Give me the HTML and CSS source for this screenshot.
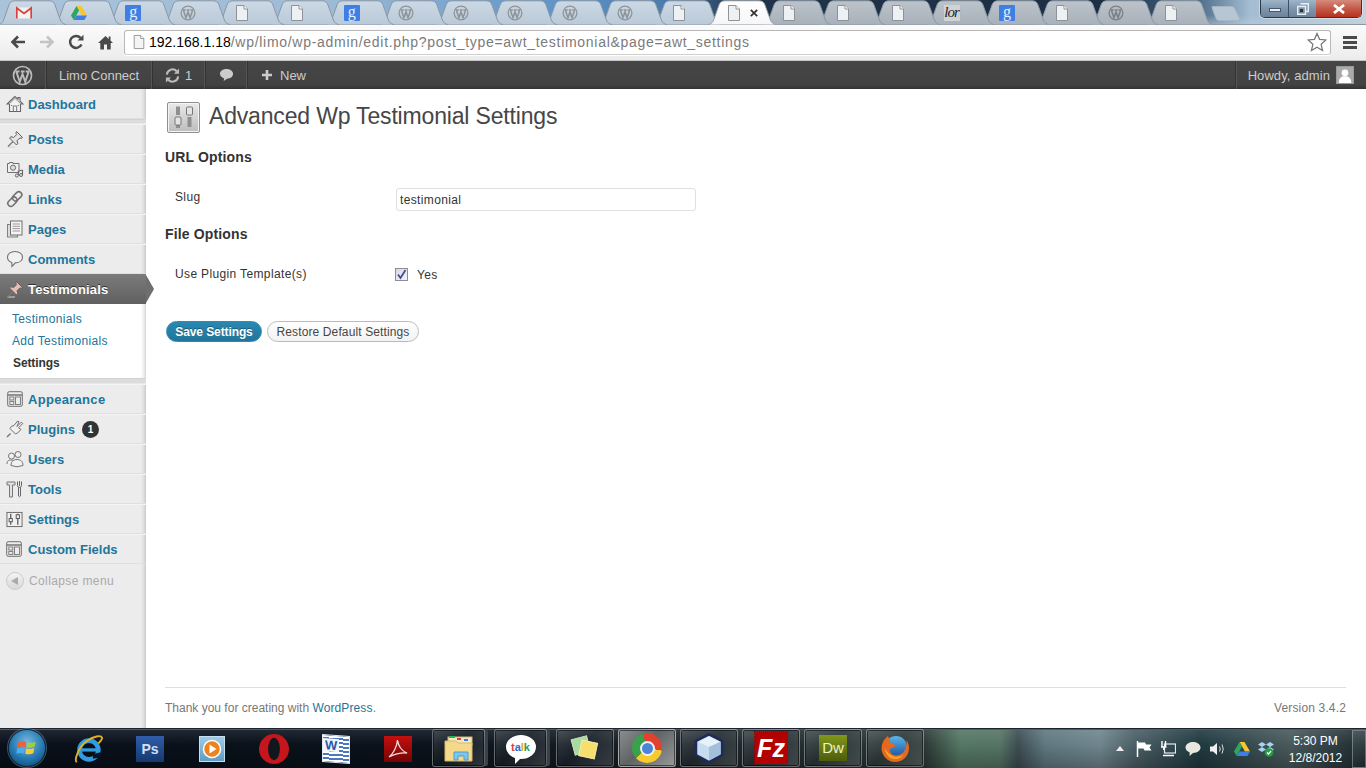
FILE: index.html
```html
<!DOCTYPE html>
<html lang="en">
<head>
<meta charset="utf-8">
<title>Advanced Wp Testimonial Settings</title>
<link rel="stylesheet" href="styles.css">
</head>
<body>
<svg class="defs" width="0" height="0" aria-hidden="true">
  <defs>
    <linearGradient id="tabLight" x1="0" y1="0" x2="0" y2="1"><stop offset="0" stop-color="#ccd9e5"/><stop offset="1" stop-color="#bac9d8"/></linearGradient>
    <linearGradient id="tabDim" x1="0" y1="0" x2="0" y2="1"><stop offset="0" stop-color="#bcc3cb"/><stop offset="1" stop-color="#a8b0b9"/></linearGradient>
    <linearGradient id="tabOn" x1="0" y1="0" x2="0" y2="1"><stop offset="0" stop-color="#ffffff"/><stop offset="1" stop-color="#f6f6f6"/></linearGradient>
    <linearGradient id="foxGlobe" x1="0" y1="0" x2="0" y2="1"><stop offset="0" stop-color="#59b6e6"/><stop offset="1" stop-color="#1d4f9e"/></linearGradient>
    <symbol id="tabshape" viewBox="0 0 68 25"><path d="M0 24.5C3 24.5 5 22 6 19L11 5C12 2 14 .8 17 .8H51C54 .8 56 2 57 5L62 19C63 22 65 24.5 68 24.5"/></symbol>
    <symbol id="doc" viewBox="0 0 16 16"><path d="M2.5 .5H10L13.5 4V15.5H2.5Z" fill="#eef1f4" stroke="#8d9298"/><path d="M10 .5V4H13.5" fill="#fff" stroke="#8d9298"/></symbol>
    <symbol id="wp" viewBox="0 0 20 20"><circle cx="10" cy="10" r="8.6" fill="none" stroke="currentColor" stroke-width="1.6"/><path d="M4.2 6.6L7.4 16L10 8.6L12.6 16L15.8 6.6M3.4 6.2H7.2M8.4 6.2H12M13 6.2H16.6" fill="none" stroke="currentColor" stroke-width="1.9"/></symbol>
    <symbol id="layout" viewBox="0 0 16 16"><rect x=".7" y=".7" width="14.6" height="14.6" rx="1.5" fill="#ececec" stroke="#6e6e6e"/><path d="M1 4H15" stroke="#6e6e6e" stroke-width="1.4"/><rect x="2.8" y="6" width="4" height="3" fill="none" stroke="#808080"/><rect x="2.8" y="10.5" width="4" height="3" fill="none" stroke="#808080"/><rect x="8.5" y="6" width="5" height="7.5" fill="none" stroke="#808080"/></symbol>
    <symbol id="pin" viewBox="0 0 18 18"><path d="M1.5 17H9" stroke="#d2d2d2"/><path d="M7 11.500L2 16.500" stroke="#777" stroke-width="1.300"/><path d="M10.500 1.500L16.500 7.500L15 8.500L14 7.800L11 10.800L11.800 13.500L10.500 15L3.500 8L5 6.700L7.700 7.500L10.700 4.500L9.800 3.200Z" fill="currentColor" stroke="#5f5f5f"/></symbol>
  </defs>
</svg>

<header class="tabstrip">
  <div class="tabs">
    <div class="tab light"><svg class="tabbg" fill="url(#tabLight)"><use href="#tabshape"/></svg>
      <svg class="fav" viewBox="0 0 16 16"><rect y="2.500" width="16" height="11" fill="#f2f2f2"/><path d="M.8 13.500V3L8 8.500L15.200 3V13.500" fill="none" stroke="#d9413a" stroke-width="1.700"/></svg></div>
    <div class="tab light"><svg class="tabbg" fill="url(#tabLight)"><use href="#tabshape"/></svg>
      <svg class="fav" viewBox="0 0 16 16"><path d="M5.5 1H10.5L16 10.5H11Z" fill="#f7c631"/><path d="M5.5 1L0 10.5L2.7 15L8 5.5Z" fill="#2fa65a"/><path d="M2.7 15H13.4L16 10.5H5.3Z" fill="#3f7fe4"/></svg></div>
    <div class="tab light"><svg class="tabbg" fill="url(#tabLight)"><use href="#tabshape"/></svg><span class="fav gfav">g</span></div>
    <div class="tab light"><svg class="tabbg" fill="url(#tabLight)"><use href="#tabshape"/></svg><svg class="fav wpfav"><use href="#wp"/></svg></div>
    <div class="tab light"><svg class="tabbg" fill="url(#tabLight)"><use href="#tabshape"/></svg><svg class="fav"><use href="#doc"/></svg></div>
    <div class="tab light"><svg class="tabbg" fill="url(#tabLight)"><use href="#tabshape"/></svg><svg class="fav"><use href="#doc"/></svg></div>
    <div class="tab light"><svg class="tabbg" fill="url(#tabLight)"><use href="#tabshape"/></svg><span class="fav gfav">g</span></div>
    <div class="tab light"><svg class="tabbg" fill="url(#tabLight)"><use href="#tabshape"/></svg><svg class="fav wpfav"><use href="#wp"/></svg></div>
    <div class="tab light"><svg class="tabbg" fill="url(#tabLight)"><use href="#tabshape"/></svg><svg class="fav wpfav"><use href="#wp"/></svg></div>
    <div class="tab light"><svg class="tabbg" fill="url(#tabLight)"><use href="#tabshape"/></svg><svg class="fav wpfav"><use href="#wp"/></svg></div>
    <div class="tab light"><svg class="tabbg" fill="url(#tabLight)"><use href="#tabshape"/></svg><svg class="fav wpfav"><use href="#wp"/></svg></div>
    <div class="tab light"><svg class="tabbg" fill="url(#tabLight)"><use href="#tabshape"/></svg><svg class="fav wpfav"><use href="#wp"/></svg></div>
    <div class="tab light"><svg class="tabbg" fill="url(#tabLight)"><use href="#tabshape"/></svg><svg class="fav"><use href="#doc"/></svg></div>
    <div class="tab active"><svg class="tabbg" fill="url(#tabOn)"><use href="#tabshape"/></svg><svg class="fav"><use href="#doc"/></svg>
      <svg class="tabclose" viewBox="0 0 8 8"><path d="M.8 .8L7.2 7.2M7.2 .8L.8 7.2" stroke="#333" stroke-width="1.8"/></svg></div>
    <div class="tab dim"><svg class="tabbg" fill="url(#tabDim)"><use href="#tabshape"/></svg><svg class="fav"><use href="#doc"/></svg></div>
    <div class="tab dim"><svg class="tabbg" fill="url(#tabDim)"><use href="#tabshape"/></svg><svg class="fav"><use href="#doc"/></svg></div>
    <div class="tab dim"><svg class="tabbg" fill="url(#tabDim)"><use href="#tabshape"/></svg><svg class="fav"><use href="#doc"/></svg></div>
    <div class="tab dim"><svg class="tabbg" fill="url(#tabDim)"><use href="#tabshape"/></svg><span class="fav lorfav">lor</span></div>
    <div class="tab dim"><svg class="tabbg" fill="url(#tabDim)"><use href="#tabshape"/></svg><span class="fav gfav">g</span></div>
    <div class="tab dim"><svg class="tabbg" fill="url(#tabDim)"><use href="#tabshape"/></svg><svg class="fav"><use href="#doc"/></svg></div>
    <div class="tab dim"><svg class="tabbg" fill="url(#tabDim)"><use href="#tabshape"/></svg><svg class="fav wpfav dark"><use href="#wp"/></svg></div>
    <div class="tab dim"><svg class="tabbg" fill="url(#tabDim)"><use href="#tabshape"/></svg><svg class="fav"><use href="#doc"/></svg></div>
  </div>
  <svg class="newtab" viewBox="0 0 30 15"><path d="M1 1.5Q1 .5 2 .5H21Q23 .5 24 3L28.500 12.500Q29 14.500 27 14.500H8Q6 14.500 5 12.500Z" fill="#b7c6d4" stroke="#a5b5c4"/></svg>
  <div class="winctl">
    <div class="wbtn wmin"><i class="minbar"></i></div>
    <div class="wbtn wmax"><svg viewBox="0 0 12 12" width="12" height="12"><path d="M3.500 .7H11.300V8.500H8.500M.7 3.500H8.500V11.300H.7Z" fill="none" stroke="#e9eef3" stroke-width="1.400"/><rect x="3" y="6" width="3" height="3" fill="#333"/></svg></div>
    <div class="wbtn wclose"><svg viewBox="0 0 14 10" width="14" height="10"><path d="M2 1L12 9M12 1L2 9" stroke="#fff" stroke-width="2.800"/></svg></div>
  </div>
</header>

<div class="toolbar">
  <svg class="navicon" viewBox="0 0 16 14"><path d="M15 7H3M8 1.500L2.500 7L8 12.500" fill="none" stroke="#4a4a4a" stroke-width="2.600"/></svg>
  <svg class="navicon" viewBox="0 0 16 14"><path d="M1 7H13M8 1.500L13.500 7L8 12.500" fill="none" stroke="#c4c4c4" stroke-width="2.600"/></svg>
  <svg class="navicon reload" viewBox="0 0 16 16"><path d="M13.500 10.500A6 6 0 1 1 12.500 3.800" fill="none" stroke="#4a4a4a" stroke-width="2.500"/><path d="M9.500 6.500H15.500V.8Z" fill="#4a4a4a"/></svg>
  <svg class="navicon home" viewBox="0 0 15 15"><path d="M7.500 1L0 8H2.300V14.500H6V9.500H9V14.500H12.700V8H15L12.500 5.600V1.500H10.700V3.900Z" fill="#4a4a4a"/></svg>
  <div class="urlbar">
    <svg class="urlpage" viewBox="0 0 16 16"><path d="M2.500 .5H10L13.500 4V15.500H2.500Z" fill="#f4f4f4" stroke="#8d8d8d"/><path d="M10 .5V4H13.500" fill="#fff" stroke="#8d8d8d"/></svg>
    <span class="urltext"><span class="urlhost">192.168.1.18</span>/wp/limo/wp-admin/edit.php?post_type=awt_testimonial&amp;page=awt_settings</span>
    <svg class="star" viewBox="0 0 18 18"><path d="M9 1.300L11.300 6.600L17 7.200L12.700 11L14 16.700L9 13.700L4 16.700L5.300 11L1 7.200L6.700 6.600Z" fill="#fff" stroke="#777" stroke-width="1.100"/></svg>
  </div>
  <div class="chromemenu"><i></i><i></i><i></i></div>
</div>

<nav class="adminbar">
  <div class="abitem abwp"><svg class="ablogo"><use href="#wp"/></svg></div>
  <div class="abitem absite">Limo Connect</div>
  <div class="abitem abupd"><svg class="abrefresh" viewBox="0 0 16 16"><path d="M2 7A6 6 0 0 1 12.500 3.500M14 9A6 6 0 0 1 3.500 12.500" fill="none" stroke="#bbb" stroke-width="2.200"/><path d="M15 .5V6H9.500ZM1 15.500V10H6.500Z" fill="#bbb"/></svg>1</div>
  <div class="abitem abcom"><svg class="abbubble" viewBox="0 0 16 14"><path d="M8 .5C3.800 .5 1 2.800 1 5.700C1 8 2.800 9.800 5.400 10.600L5 13.500L8.600 10.900C12.600 10.800 15 8.500 15 5.700C15 2.800 12.200 .5 8 .5Z" fill="#ccc"/></svg></div>
  <div class="abitem abnew"><svg class="abplus" viewBox="0 0 12 12"><path d="M6 1V11M1 6H11" stroke="#ccc" stroke-width="2.600"/></svg>New</div>
  <div class="abitem abhowdy">Howdy, admin<span class="avatar"><svg viewBox="0 0 18 18" width="16" height="16"><circle cx="9" cy="6.500" r="3.800" fill="#fff"/><path d="M2 18C2 12.500 5 10.500 9 10.500S16 12.500 16 18Z" fill="#fff"/></svg></span></div>
</nav>

<div class="main">
  <aside class="sidebar">
    <ul class="menu">
      <li class="mi first"><svg class="mic" viewBox="0 0 18 18"><path d="M9 1.500L1 9H3.500V16.500H14.500V9H17L14 6.200V2.500H12V4.300Z" fill="#f2f2f2" stroke="#666" stroke-width="1.100"/><path d="M3.500 8.500L9 3.500L14.500 8.500" fill="none" stroke="#999"/><path d="M7.300 16.500V11H10.700V16.500M5 10.500H6.300M11.700 10.500H13" fill="none" stroke="#777"/></svg><a>Dashboard</a></li>
      <li class="msep"></li>
      <li class="mi"><svg class="mic picon"><use href="#pin"/></svg><a>Posts</a></li>
      <li class="mi"><svg class="mic" viewBox="0 0 18 18"><path d="M1.500 3.500H3.500V2.500H7V3.500H13V12.500H1.500Z" fill="#efefef" stroke="#707070"/><circle cx="7" cy="7.700" r="2.600" fill="#dcdcdc" stroke="#707070"/><path d="M12.300 11V15.500M16.500 10V15" stroke="#666" stroke-width="1.100"/><path d="M12.300 11L16.500 10" stroke="#666"/><circle cx="10.800" cy="15.500" r="1.500" fill="#e8e8e8" stroke="#666"/><circle cx="15" cy="15" r="1.500" fill="#e8e8e8" stroke="#666"/></svg><a>Media</a></li>
      <li class="mi"><svg class="mic" viewBox="0 0 18 18"><rect x="8" y="1" width="6" height="10.500" rx="3" transform="rotate(45 11 6.500)" fill="none" stroke="#737373" stroke-width="1.600"/><rect x="3.500" y="6.500" width="6" height="10.500" rx="3" transform="rotate(45 6.500 11.700)" fill="none" stroke="#737373" stroke-width="1.600"/></svg><a>Links</a></li>
      <li class="mi"><svg class="mic" viewBox="0 0 18 18"><rect x="1.500" y="4.500" width="10" height="12.500" fill="#dcdcdc" stroke="#808080"/><rect x="4.500" y="1" width="11.500" height="14" fill="#f4f4f4" stroke="#6e6e6e"/><path d="M6.500 4H14M6.500 6.300H14M6.500 8.600H14M6.500 11H14" stroke="#999"/></svg><a>Pages</a></li>
      <li class="mi"><svg class="mic" viewBox="0 0 18 18"><path d="M9 1.500C4.500 1.500 1.500 4 1.500 7.200C1.500 9.700 3.300 11.600 5.800 12.400L6 16.500L9.400 12.900C13.700 12.800 16.500 10.300 16.500 7.200C16.500 4 13.500 1.500 9 1.500Z" fill="#f1f1f1" stroke="#737373" stroke-width="1.100"/></svg><a>Comments</a></li>
      <li class="mi current"><svg class="mic picon pink"><use href="#pin"/></svg><a>Testimonials</a></li>
      <li class="sub">
        <a class="sublink">Testimonials</a>
        <a class="sublink">Add Testimonials</a>
        <a class="sublink on">Settings</a>
      </li>
      <li class="msep after"></li>
      <li class="mi"><svg class="mic lay"><use href="#layout"/></svg><a class="wide">Appearance</a></li>
      <li class="mi"><svg class="mic" viewBox="0 0 18 18"><path d="M1 17L4.500 13.500" stroke="#777" stroke-width="1.400"/><path d="M4 8.500L9.500 14L11.500 13L15 9.500L12.500 7.800L16.800 3.500L15.300 2.200L11 6.500L11.600 4.600L13 1.800L11.600 1L8 5.500L5.500 6.300Z" fill="#f0f0f0" stroke="#6e6e6e"/></svg><a>Plugins</a><span class="badge">1</span></li>
      <li class="mi"><svg class="mic" viewBox="0 0 18 18"><circle cx="5.500" cy="6" r="3" fill="#f1f1f1" stroke="#757575"/><circle cx="12" cy="4.500" r="3" fill="#f1f1f1" stroke="#757575"/><path d="M1 14C1 10.500 3 10 5.500 10C8 10 9 11 9 13" fill="#f1f1f1" stroke="#757575"/><path d="M5 15.500C5 11 8 9.500 11 9.500S17 11 17 15.500Q11 18 5 15.500Z" fill="#f1f1f1" stroke="#757575"/></svg><a>Users</a></li>
      <li class="mi"><svg class="mic" viewBox="0 0 18 18"><path d="M1 2H9V5H6.500V17H3.500V5H1Z" fill="#e2e2e2" stroke="#777"/><path d="M13.500 1V6M11.500 1.500V5.500Q11.500 7.500 13.500 7.500T15.500 5.500V1.500M12.500 7.500V16Q13.500 17.500 14.500 16V7.500" fill="none" stroke="#666"/></svg><a>Tools</a></li>
      <li class="mi"><svg class="mic setic" viewBox="0 0 18 18"><rect x="1" y="1.500" width="16" height="15" fill="#f0f0f0" stroke="#666"/><path d="M5 3V8M5 11.500V14.500M12.500 3V4M12.500 8V14.500" stroke="#555" stroke-width="1.300"/><rect x="3.300" y="8" width="3.400" height="3.400" fill="none" stroke="#555"/><rect x="10.800" y="4" width="3.400" height="4" fill="none" stroke="#555"/></svg><a class="seta">Settings</a></li>
      <li class="mi"><svg class="mic lay cf"><use href="#layout"/></svg><a>Custom Fields</a></li>
      <li class="collapse"><span class="colbtn"><i></i></span>Collapse menu</li>
    </ul>
  </aside>

  <main class="content">
    <div class="pagehead">
      <div class="pageicon">
        <svg viewBox="0 0 30 28" width="30" height="28"><path d="M9 3.500V12M20.500 14V24" stroke="#8f8f8f" stroke-width="4"/><path d="M9 22V25" stroke="#8f8f8f" stroke-width="4"/><rect x="6" y="14" width="6" height="8" rx="1" fill="#e4e4e4" stroke="#777"/><rect x="17.500" y="4" width="6" height="8" rx="1" fill="#e4e4e4" stroke="#777"/></svg>
      </div>
      <h1 class="title">Advanced Wp Testimonial Settings</h1>
    </div>
    <h3 class="sect sect1">URL Options</h3>
    <div class="row row1">
      <label class="lbl">Slug</label>
      <input class="txt" type="text" value="testimonial">
    </div>
    <h3 class="sect sect2">File Options</h3>
    <div class="row row2">
      <span class="lbl">Use Plugin Template(s)</span>
      <span class="check"><svg viewBox="0 0 11 11" width="11" height="11"><path d="M2 5.500L4.500 9L9.500 1" fill="none" stroke="#3c4b92" stroke-width="1.700"/></svg></span>
      <span class="yes">Yes</span>
    </div>
    <div class="buttons">
      <button class="btn primary" type="button">Save Settings</button>
      <button class="btn secondary" type="button">Restore Default Settings</button>
    </div>
    <footer class="foot">
      <span>Thank you for creating with <a class="wplink">WordPress</a>.</span>
      <span class="ver">Version 3.4.2</span>
    </footer>
  </main>
</div>

<footer class="taskbar">
  <div class="orb"><svg viewBox="0 0 18 18" width="22" height="22"><path d="M2 4Q5 2.800 8.400 4L7.600 8.300Q4.500 7.200 1.200 8.400Z" fill="#f0603a"/><path d="M9.200 4.300Q12.500 5.500 16 3.800L15.200 8Q12 9.500 8.500 8.500Z" fill="#9ad13f"/><path d="M1 9.300Q4.300 8.200 7.400 9.300L6.600 13.600Q3.500 12.500 .300 13.700Z" fill="#49aef0"/><path d="M8.300 9.500Q11.800 10.500 15 9L14.200 13.300Q11 14.700 7.500 13.700Z" fill="#fbc934"/></svg></div>
  <div class="pinned">
    <div class="slot"><svg class="ticon" viewBox="0 0 32 32"><circle cx="17" cy="17" r="10" fill="none" stroke="#2f9be0" stroke-width="5"/><path d="M8 17H26" stroke="#2f9be0" stroke-width="3.500"/><path d="M21 24L30 22" stroke="#0b131c" stroke-width="5"/><path d="M4 30C1 28 6 14 14 8C22 2 30 1 31 4C31.500 6 29 8 27 10" fill="none" stroke="#e6b020" stroke-width="2"/></svg></div>
    <div class="slot"><span class="ps">Ps</span></div>
    <div class="slot"><div class="wmp"><svg viewBox="0 0 20 20" width="20" height="20"><circle cx="10" cy="10" r="8.500" fill="#f0821e" stroke="#fff" stroke-width="1.500"/><path d="M7.500 5.500L14.500 10L7.500 14.500Z" fill="#fff"/></svg></div></div>
    <div class="slot"><svg class="ticon" viewBox="0 0 28 28"><ellipse cx="14" cy="14" rx="14" ry="14" fill="#c5161d"/><ellipse cx="14" cy="14" rx="5.500" ry="10.500" fill="#12171d"/></svg></div>
    <div class="slot"><div class="word"><span>W</span></div></div>
    <div class="slot"><div class="pdf"><svg viewBox="0 0 28 26" width="28" height="26"><path d="M5 21C9 18 13 11 13.500 4C14.500 11 18 15 23 17C18 16.500 11 18 5 21Z" fill="none" stroke="#f1dede" stroke-width="1.300"/></svg></div></div>
  </div>
  <div class="running">
    <div class="tbtn stacked"><svg class="ticon" viewBox="0 0 30 30"><rect x="4" y="4" width="24" height="8" fill="#f3e7c6" stroke="#cdb67b"/><path d="M5 3H11V5H5Z" fill="#27b24a"/><path d="M13 5H17V7H13Z" fill="#d8402f"/><path d="M20 6H24V8H20Z" fill="#2f86d8"/><path d="M1 8H12L14 10H28V28H1Z" fill="#f5d98b" stroke="#d7b866"/><path d="M10 27V19H24V27H20V23H14V27Z" fill="#7cc6ec" stroke="#4f9ccb"/></svg></div>
    <div class="tbtn stacked"><div class="talk"><span class="c1">t</span><span class="c2">a</span><span class="c3">l</span><span class="c4">k</span></div></div>
    <div class="tbtn"><svg class="ticon" viewBox="0 0 32 28"><rect x="3" y="3" width="17" height="17" transform="rotate(-15 11 11)" fill="#a8dba0" stroke="#cfe8c8"/><rect x="11" y="7" width="17" height="17" transform="rotate(12 19 15)" fill="#f7df6d" stroke="#f8eeb0"/></svg></div>
    <div class="tbtn tactive"><div class="chromelogo"><i></i></div></div>
    <div class="tbtn"><svg class="ticon" viewBox="0 0 30 30"><path d="M15 1.500L28 8V22L15 29L2 22V8Z" fill="#c7dcef" stroke="#1d2a5c" stroke-width="2.500"/><path d="M4 9L15 14L26 9L15 3.500Z" fill="#e7f1f9"/><path d="M15 14V27L26 21.500V9Z" fill="#a3bfd9"/></svg></div>
    <div class="tbtn"><div class="fz">Fz</div></div>
    <div class="tbtn"><div class="dw">Dw</div></div>
    <div class="tbtn"><svg class="ticon" viewBox="0 0 30 30"><circle cx="16" cy="14" r="11" fill="url(#foxGlobe)"/><path d="M8 3C5 5 2 9 1.500 15C1.500 23 8 29 15 29C23 29 29 23 29 15C29 12 28 9 26.500 7C27.500 13 25 20 19 22C14 23.500 10 21 10 17C10 14.500 13 14.500 15 14L14 11C12 11 10.500 10.500 10 9C10 6.500 9 5 8 3Z" fill="#e5681c"/><path d="M5 15C5 21 9 26 15 26C19 26 22.500 24 24.500 21C21 24 15 25 11 22C7.500 20 6 17 5 15Z" fill="#f6a623"/></svg></div>
  </div>
  <div class="tray">
    <svg class="trarrow" viewBox="0 0 8 5" width="8" height="5"><path d="M0 5L4 0L8 5Z" fill="#eee"/></svg>
    <svg class="tri" viewBox="0 0 16 16"><path d="M1.500 0V16" stroke="#fff" stroke-width="1.500"/><path d="M2 1.500H9L10 3.500H15.500L13.500 6.500L15.500 9.500H8.500L7.500 7.500H2Z" fill="#fff"/></svg>
    <svg class="tri" viewBox="0 0 16 16"><rect x="4.500" y="3" width="11" height="9" fill="none" stroke="#e8e8e8" stroke-width="1.200"/><path d="M2 0V6M5.500 0V6M1 6H6.500M3.800 6V9" stroke="#fff" stroke-width="1.400"/><path d="M3 14.500H14" stroke="#fff" stroke-width="1.500"/></svg>
    <svg class="tri" viewBox="0 0 16 16"><path d="M8 1C3.500 1 .5 3.500 .5 6.500C.5 8.800 2.300 10.600 4.700 11.400L4.500 15L8 11.900C12.500 11.900 15.500 9.500 15.500 6.500C15.500 3.500 12.500 1 8 1Z" fill="#e8e8e0"/></svg>
    <svg class="tri" viewBox="0 0 16 16"><path d="M1 5.500H4L8 2V14L4 10.500H1Z" fill="#f0f0f0"/><path d="M10.500 5.500Q12 8 10.500 10.500M13 3.500Q15.500 8 13 12.500" fill="none" stroke="#ddd"/></svg>
    <svg class="tri" viewBox="0 0 16 16"><path d="M5.500 1H10.500L16 10.500H11Z" fill="#f7c631"/><path d="M5.500 1L0 10.500L2.700 15L8 5.500Z" fill="#2fa65a"/><path d="M2.700 15H13.400L16 10.500H5.300Z" fill="#3f7fe4"/></svg>
    <svg class="tri trilast" viewBox="0 0 16 16"><path d="M4 1L8 3.500L4 6L0 3.500ZM12 1L16 3.500L12 6L8 3.500ZM4 6L8 8.500L4 11L0 8.500ZM12 6L16 8.500L12 11L8 8.500Z" fill="#a9d3f2"/><circle cx="11" cy="11.500" r="4.300" fill="#23a045"/><path d="M9 11.500L10.500 13L13 10" fill="none" stroke="#fff" stroke-width="1.200"/></svg>
    <div class="clock"><span>5:30 PM</span><span>12/8/2012</span></div>
    <div class="showdesk"></div>
  </div>
</footer>
</body>
</html>
```
FILE: styles.css
```css
* { box-sizing: border-box; }
html, body { margin: 0; padding: 0; }
body {
  width: 1366px;
  height: 768px;
  overflow: hidden;
  display: flex;
  flex-direction: column;
  font-family: "Liberation Sans", Arial, sans-serif;
  font-size: 12px;
  color: #333;
  background: #fff;
}
.defs { position: absolute; }
a { color: #21759b; text-decoration: none; }
ul { list-style: none; margin: 0; padding: 0; }

/* Browser tab strip */
.tabstrip {
  height: 25px;
  flex: none;
  display: flex;
  background:
    linear-gradient(180deg, rgba(255,255,255,0) 60%, rgba(190,205,220,.55) 100%),
    linear-gradient(90deg, #a9c3da 0, #9dbbd6 330px, #5f93c8 560px, #4d7eae 660px, #1f3349 750px, #1c2f44 1100px, #3f607d 1190px, #a4bdd2 1250px, #c2d2de 1366px);
  box-shadow: inset 0 -1px 0 #8e98a3;
}
.tabs { display: flex; margin-left: -2px; flex: none; }
.tab {
  position: relative;
  width: 68px;
  height: 25px;
  margin-right: -13.4px;
  flex: none;
}
.tab:last-child { margin-right: 0; }
.tabbg { position: absolute; left: 0; top: 0; width: 68px; height: 25px; stroke: #8b97a3; stroke-width: 1; }
.active { z-index: 40; }
.active .tabbg { stroke: #9aa0a6; }
.tab:nth-child(1) { z-index: 30; } .tab:nth-child(2) { z-index: 29; } .tab:nth-child(3) { z-index: 28; }
.tab:nth-child(4) { z-index: 27; } .tab:nth-child(5) { z-index: 26; } .tab:nth-child(6) { z-index: 25; }
.tab:nth-child(7) { z-index: 24; } .tab:nth-child(8) { z-index: 23; } .tab:nth-child(9) { z-index: 22; }
.tab:nth-child(10) { z-index: 21; } .tab:nth-child(11) { z-index: 20; } .tab:nth-child(12) { z-index: 19; }
.tab:nth-child(13) { z-index: 18; } .tab:nth-child(15) { z-index: 16; } .tab:nth-child(16) { z-index: 15; }
.tab:nth-child(17) { z-index: 14; } .tab:nth-child(18) { z-index: 13; } .tab:nth-child(19) { z-index: 12; }
.tab:nth-child(20) { z-index: 11; } .tab:nth-child(21) { z-index: 10; } .tab:nth-child(22) { z-index: 9; }
.fav { position: absolute; left: 18px; top: 5px; width: 16px; height: 16px; color: #9a9fa5; }
.gfav {
  background: #3f7fe4;
  color: #e6effc;
  border-radius: 1px;
  font: 16px/13px "Liberation Serif", serif;
  text-align: center;
}
.wpfav { color: #8f9499; }
.wpfav.dark { color: #7c8085; }
.lorfav {
  background: #cfd3d6;
  color: #222;
  font: italic 15px/15px "Liberation Serif", serif;
  letter-spacing: -1px;
}
.tabclose { position: absolute; left: 42px; top: 9px; width: 8px; height: 8px; }
.newtab { width: 30px; height: 15px; flex: none; margin: 6px 0 0 -2px; }
.winctl {
  margin-left: auto;
  margin-right: 4px;
  width: 102px;
  height: 18px;
  display: flex;
  flex: none;
  border: 1px solid #2b3a4b;
  border-top: 0;
  border-radius: 0 0 5px 5px;
  overflow: hidden;
  box-shadow: 0 0 0 1px rgba(255,255,255,.35);
}
.wbtn { display: flex; align-items: center; justify-content: center; height: 100%; }
.wmin, .wmax {
  width: 28px;
  background: linear-gradient(180deg, #9fb5c9, #7e97ad 50%, #6c8298);
  border-right: 1px solid #3d5166;
}
.wmax { width: 27px; border-right: 0; }
.minbar { display: block; width: 12px; height: 4px; margin-top: 3px; background: #e9eef3; border: 1px solid #47576a; }
.wclose { flex: 1; background: linear-gradient(180deg, #d68b7d, #c45a48 50%, #b8301f); }

/* Browser toolbar */
.toolbar {
  height: 36px;
  flex: none;
  display: flex;
  align-items: center;
  padding: 0 9px 1px 10px;
  background: linear-gradient(180deg, #fbfbfb, #ececec);
  border-bottom: 1px solid #c6c6c6;
}
.navicon { width: 16px; height: 14px; margin-right: 13px; flex: none; }
.reload { height: 16px; margin-right: 14px; }
.home { height: 15px; width: 15px; margin-right: 11px; }
.urlbar {
  flex: 1;
  height: 25px;
  display: flex;
  align-items: center;
  padding: 0 3px 0 7px;
  background: #fff;
  border: 1px solid #b8b8b8;
  border-bottom-color: #d0d0d0;
  border-radius: 3px;
  font-size: 14px;
  color: #7b7b7b;
  box-shadow: 0 1px 0 #fff;
}
.urlpage { width: 14px; height: 16px; flex: none; margin-right: 3px; }
.urltext { flex: 1; white-space: nowrap; letter-spacing: .71px; }
.urlhost { color: #000; letter-spacing: 0; }
.star { width: 20px; height: 20px; flex: none; }
.chromemenu { width: 14px; margin-left: 12px; display: flex; flex-direction: column; gap: 2px; flex: none; }
.chromemenu i { display: block; height: 3px; background: #4a4a4a; }

/* WordPress admin bar */
.adminbar {
  height: 28px;
  flex: none;
  display: flex;
  background: linear-gradient(180deg, #464646, #424242 85%, #333);
  color: #ccc;
  font-size: 13px;
}
.abitem { display: flex; align-items: center; height: 100%; border-right: 1px solid #555; box-shadow: 1px 0 0 #333; }
.abwp { width: 46px; justify-content: center; color: #bbb; }
.ablogo { width: 21px; height: 21px; }
.absite { width: 106px; padding-left: 13px; }
.abupd { width: 53px; padding-left: 13px; }
.abrefresh { width: 15px; height: 15px; margin-right: 5px; }
.abcom { width: 42px; justify-content: center; padding-left: 1px; }
.abbubble { width: 15px; height: 14px; }
.abnew { padding-left: 14px; border: 0; box-shadow: none; }
.abplus { width: 12px; height: 12px; margin-right: 7px; }
.abhowdy { margin-left: auto; padding: 0 12px 0 12px; border: 0; border-left: 1px solid #333; box-shadow: inset 1px 0 0 #555; letter-spacing: .08px; }
.avatar {
  width: 18px;
  height: 18px;
  margin-left: 6px;
  background: #aaa;
  border: 1px solid #999;
  display: flex;
  align-items: flex-end;
  justify-content: center;
}

/* Page body */
.main { flex: 1; min-height: 0; display: flex; }
.sidebar {
  width: 146px;
  flex: none;
  background: linear-gradient(90deg, #ececec 141px, #dcdcdc 144px, #c9c9c9 146px);
}
.menu { display: flex; flex-direction: column; }
.mi {
  position: relative;
  height: 30px;
  display: flex;
  align-items: center;
  padding-left: 6px;
  font-size: 13px;
  font-weight: bold;
  border-top: 1px solid #f4f4f4;
  border-bottom: 1px solid #dfdfdf;
}
.mi.first { border-top: 0; padding-top: 1px; }
.mi a { color: #21759b; }
.mic { width: 18px; height: 18px; margin-right: 4px; flex: none; color: #e4e4e4; }
.lay { width: 16px; height: 16px; margin: 0 5px 0 1px; }
.cf { margin: 0 6px 0 0; }
.seta { margin-left: 1px; }
.setic { width: 17px; height: 17px; }
.wide { letter-spacing: .3px; }
.msep { height: 5px; background: #dcdcdc; border-bottom: 1px solid #e8e8e8; border-top: 1px solid #d2d2d2; }
.msep.after { height: 6px; }
.current {
  background: linear-gradient(180deg, #7b7b7b, #606060);
  border: 0;
}
.current::after {
  content: "";
  position: absolute;
  left: 146px;
  top: 1px;
  border-left: 8px solid #6e6e6e;
  border-top: 14px solid transparent;
  border-bottom: 14px solid transparent;
}
.current a { color: #fff; text-shadow: 0 -1px 0 #333; letter-spacing: .15px; }
.current .mic { color: #e8bdb8; }
.sub {
  height: 74px;
  padding-top: 4px;
  background: linear-gradient(90deg, #fff 141px, #ededed 144px, #d4d4d4 146px);
  display: flex;
  flex-direction: column;
}
.sublink { height: 22px; line-height: 22px; padding-left: 12px; letter-spacing: .33px; }
.sublink.on { color: #333; font-weight: bold; padding-left: 13px; letter-spacing: -.1px; }
.badge {
  width: 17px;
  height: 17px;
  margin-left: 7px;
  border-radius: 50%;
  background: #333;
  color: #fff;
  font-size: 10px;
  line-height: 17px;
  text-align: center;
}
.collapse {
  height: 34px;
  display: flex;
  align-items: center;
  padding-left: 6px;
  color: #aaa;
  font-size: 12px;
  letter-spacing: .38px;
}
.colbtn {
  width: 18px;
  height: 18px;
  margin-right: 5px;
  border-radius: 50%;
  background: linear-gradient(180deg, #f4f4f4, #d8d8d8);
  border: 1px solid #ccc;
  display: flex;
  align-items: center;
  justify-content: center;
}
.colbtn i { border-right: 7px solid #aaa; border-top: 4px solid transparent; border-bottom: 4px solid transparent; margin-left: -2px; }

.content { flex: 1; min-width: 0; padding: 0 20px 0 19px; display: flex; flex-direction: column; background: #fff; }
.pagehead { display: flex; align-items: center; height: 30px; margin-top: 13px; padding-left: 2px; }
.pageicon {
  width: 33px;
  height: 31px;
  margin-right: 9px;
  background: linear-gradient(180deg, #e9e9e9, #bdbdbd);
  border: 1px solid #8f8f8f;
  border-radius: 2px;
  box-shadow: inset 0 0 0 1px #f4f4f4;
  display: flex;
  align-items: center;
  justify-content: center;
}
.title { margin: 0 0 1px; font-size: 23px; font-weight: normal; color: #464646; white-space: nowrap; letter-spacing: -.17px; }
.sect { margin: 0; font-size: 14px; font-weight: bold; color: #333; line-height: 16px; letter-spacing: .15px; }
.sect1 { margin-top: 17px; }
.sect2 { margin-top: 15px; }
.row { display: flex; align-items: center; padding-left: 10px; position: relative; }
.row1 { height: 23px; margin-top: 23px; }
.row2 { height: 14px; margin-top: 25px; }
.lbl { width: 221px; flex: none; margin-top: -5px; letter-spacing: .36px; }
.row2 .lbl { width: 220px; margin-top: 0; }
.txt {
  width: 300px;
  height: 23px;
  padding: 2px 3px;
  border: 1px solid #dfdfdf;
  border-radius: 3px;
  background: #fff;
  color: #333;
  font: 12px "Liberation Sans", Arial, sans-serif;
  letter-spacing: .36px;
}
.check {
  width: 13px;
  height: 13px;
  background: linear-gradient(135deg, #d8d8e0, #f4f4f6);
  border: 1px solid #8d8d95;
  display: flex;
  align-items: center;
  justify-content: center;
}
.yes { margin: 2px 0 0 9px; letter-spacing: .3px; }
.buttons { display: flex; gap: 5px; margin-top: 40px; padding-left: 1px; }
.btn {
  height: 21px;
  padding: 0;
  border-radius: 11px;
  font: 12px "Liberation Sans", Arial, sans-serif;
  white-space: nowrap;
  cursor: pointer;
}
.primary {
  width: 96px;
  background: linear-gradient(180deg, #2a88b0, #21759b);
  border: 1px solid #298cba;
  color: #fff;
  font-weight: bold;
  letter-spacing: -.1px;
  text-shadow: 0 -1px 0 rgba(0,0,0,.3);
}
.secondary {
  width: 152px;
  background: linear-gradient(180deg, #fff, #f2f2f2);
  border: 1px solid #bbb;
  color: #464646;
  letter-spacing: .12px;
}
.foot {
  margin-top: auto;
  height: 41px;
  display: flex;
  justify-content: space-between;
  align-items: flex-start;
  padding-top: 13px;
  border-top: 1px solid #dfdfdf;
  color: #777;
}
.wplink { letter-spacing: .12px; }
.ver { letter-spacing: .15px; }

/* Windows taskbar */
.taskbar {
  height: 40px;
  flex: none;
  display: flex;
  position: relative;
  background:
    linear-gradient(180deg, rgba(255,255,255,.1), rgba(0,0,0,0) 40%, rgba(0,0,0,.25)),
    linear-gradient(90deg, #09101a 0, #0a121b 430px, #182028 640px, #2b3836 924px, #547763 960px, #567464 1000px, #3d4d52 1018px, #5f7880 1045px, #6f858d 1100px, #4c5f66 1135px, #1f3a40 1200px, #4a5a5c 1290px, #1c2a30 1366px);
  border-top: 1px solid #1a2531;
  box-shadow: inset 0 1px 0 #4d5966;
}
.orb {
  width: 38px;
  height: 38px;
  margin: 0 0 0 8px;
  border-radius: 50%;
  background: radial-gradient(circle at 50% 35%, #78b8e0, #2478b0 55%, #0c3c66);
  border: 1px solid #16293c;
  box-shadow: 0 0 0 1px rgba(120,170,210,.45);
  flex: none;
  display: flex;
  align-items: center;
  justify-content: center;
}
.pinned { display: flex; margin-left: 11px; flex: none; }
.slot { width: 62px; display: flex; align-items: center; justify-content: center; }
.ticon { width: 30px; height: 30px; }
.ps {
  width: 28px;
  height: 26px;
  background: linear-gradient(180deg, #2f5da8, #17386f);
  color: #cfe0f4;
  font-size: 14px;
  font-weight: bold;
  line-height: 26px;
  text-align: center;
}
.wmp {
  width: 26px;
  height: 26px;
  background: linear-gradient(180deg, #9ccbe8, #5f9cc4);
  border: 1px solid #c6dfef;
  display: flex;
  align-items: center;
  justify-content: center;
}
.word {
  width: 28px;
  height: 28px;
  background: repeating-linear-gradient(180deg, #fff 0 2px, #4d78c0 2px 4px);
  border: 1px solid #dfe8f5;
  transform: skewY(4deg);
}
.word span {
  display: block;
  width: 16px;
  background: #f2f6fb;
  color: #2a55a8;
  font: bold 13px/13px "Liberation Sans", Arial, sans-serif;
  padding-left: 2px;
  margin-top: 3px;
}
.pdf { width: 28px; height: 26px; background: linear-gradient(180deg, #c30f0f, #760303); }
.running { display: flex; margin-left: 3px; flex: none; }
.tbtn {
  width: 58px;
  height: 38px;
  margin-right: 4px;
  display: flex;
  align-items: center;
  justify-content: center;
  border: 1px solid rgba(255,255,255,.28);
  border-radius: 3px;
  background: linear-gradient(135deg, rgba(255,255,255,.16), rgba(255,255,255,.03) 45%, rgba(255,255,255,.16));
  box-shadow: inset 0 0 0 1px rgba(0,0,0,.5);
}
.stacked { width: 53px; margin-right: 9px; box-shadow: 4px 0 0 -1px #3a4249, inset 0 0 0 1px rgba(0,0,0,.5); }
.tactive { background: linear-gradient(135deg, #8a8f90, #5f6364 45%, #97999a); }
.talk {
  width: 30px;
  height: 24px;
  margin-bottom: 3px;
  border-radius: 50%;
  background: #fff;
  font: bold 11px/24px "Liberation Sans", Arial, sans-serif;
  text-align: center;
  position: relative;
}
.talk::after {
  content: "";
  position: absolute;
  left: 9px;
  bottom: -5px;
  border-top: 7px solid #fff;
  border-right: 7px solid transparent;
}
.c1 { color: #d0453a; } .c2 { color: #2b69d6; } .c3 { color: #e4a81f; } .c4 { color: #2e9d4d; }
.chromelogo {
  width: 30px;
  height: 30px;
  border-radius: 50%;
  background: conic-gradient(#e4402f 0 100deg, #f7cb2e 100deg 225deg, #3aa14b 225deg 345deg, #e4402f 345deg);
  display: flex;
  align-items: center;
  justify-content: center;
}
.chromelogo i { display: block; width: 15px; height: 15px; border-radius: 50%; background: #4b85d8; border: 2px solid #f1f1f1; }
.fz {
  width: 32px;
  height: 32px;
  background: #b30000;
  color: #fff;
  font: italic bold 25px/32px "Liberation Sans", Arial, sans-serif;
  text-align: center;
  outline: 1px dotted #7c0a0a;
}
.dw {
  width: 28px;
  height: 26px;
  background: linear-gradient(180deg, #80981a, #4d5c0a);
  color: #eef2cf;
  font: 15px/26px "Liberation Sans", Arial, sans-serif;
  text-align: center;
}
.tray { margin-left: auto; display: flex; align-items: center; color: #fff; flex: none; }
.trarrow { margin-right: 12px; }
.tri { width: 16px; height: 16px; margin-right: 8.400px; flex: none; }
.tri:nth-child(7) { margin-right: 0; }
.clock {
  width: 78px;
  padding-left: 5px;
  margin-top: 2px;
  display: flex;
  flex-direction: column;
  align-items: center;
  gap: 3px;
  line-height: 14px;
  font-size: 12px;
  color: #fff;
}
.showdesk {
  width: 14px;
  height: 38px;
  border: 1px solid rgba(255,255,255,.3);
  background: linear-gradient(180deg, rgba(255,255,255,.12), rgba(255,255,255,.02));
}
```
